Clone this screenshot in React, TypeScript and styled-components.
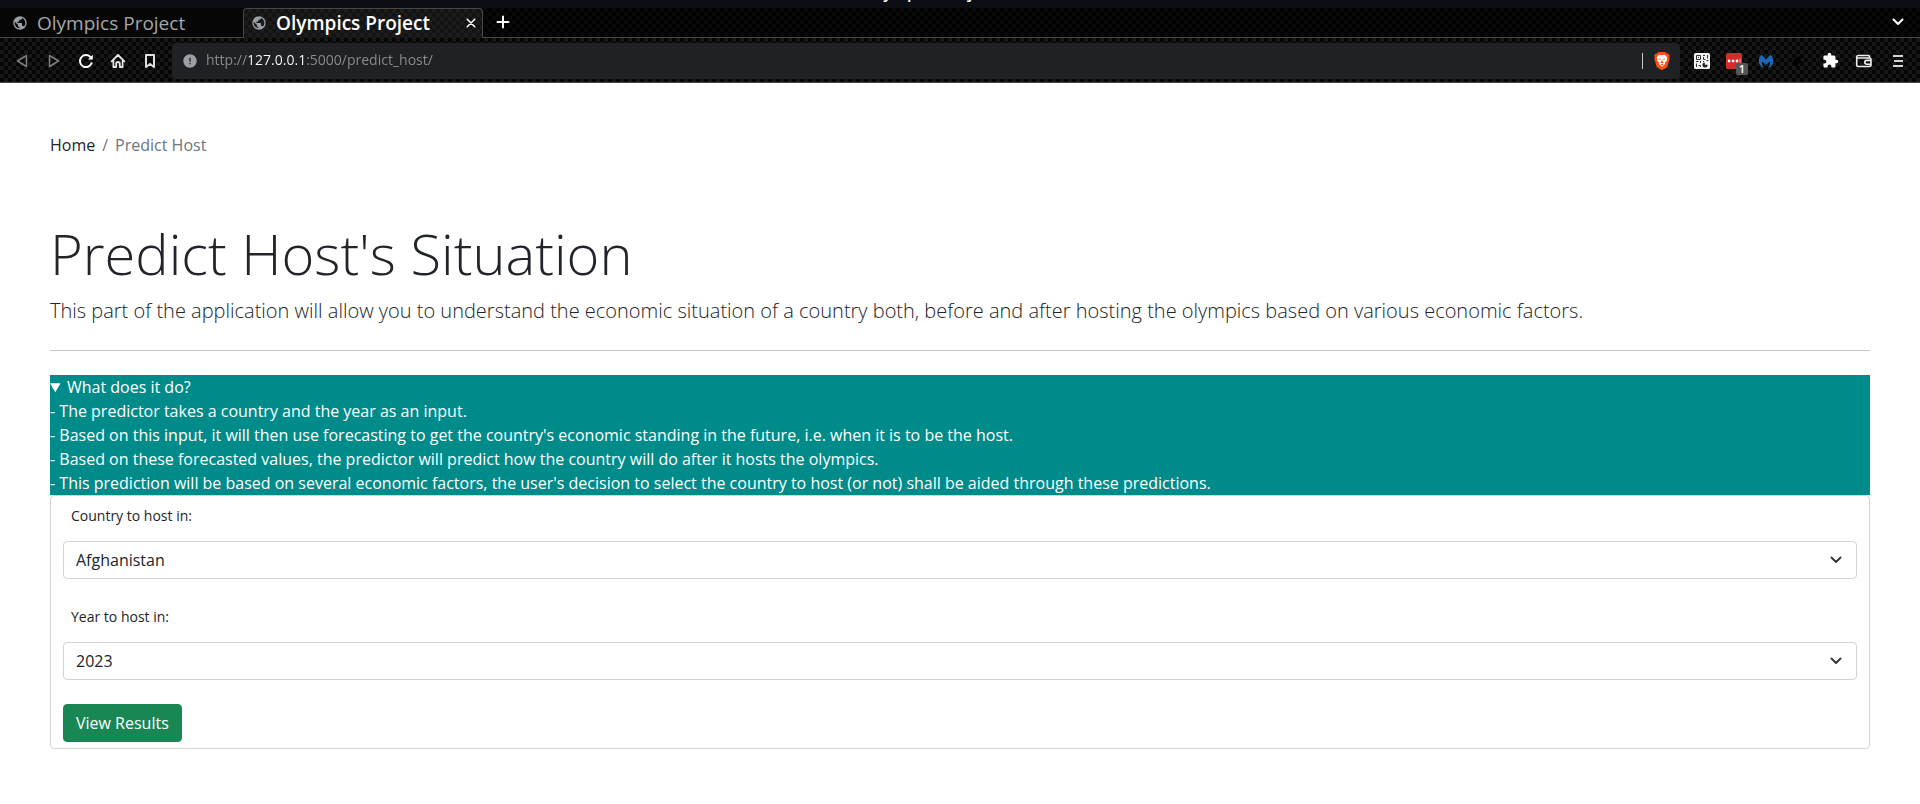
import React from "react";
import styled, { createGlobalStyle, css } from "styled-components";
import { MdPublic, MdError, MdExtension } from "react-icons/md";

const GlobalStyle = createGlobalStyle`
  *, *::before, *::after { box-sizing: border-box; }
  body {
    margin: 0;
    background: #fff;
    color: #212529;
    font-family: "Open Sans", "Noto Sans", sans-serif;
    font-size: 16px;
    line-height: 24px;
  }
  button, input, select { font: inherit; }
`;

const carbon = (light: string, dark: string) => css`
  background-color: ${dark};
  background-image: repeating-conic-gradient(${light} 0 25%, ${dark} 0 50%);
  background-size: 8px 8px;
`;

/* ---------- browser window ---------- */

const Chrome = styled.header`
  color: #fff;
  background: #000;
`;

const TitleBar = styled.div`
  display: flex;
  justify-content: center;
  align-items: flex-end;
  height: 8px;
  padding-bottom: 6px;
  overflow: hidden;
  background: #0d0e14;
  font-size: 16px;
  font-weight: 600;
  line-height: 20px;
  white-space: nowrap;
`;

const TabStrip = styled.div`
  display: flex;
  height: 30px;
  ${carbon("#090909", "#020202")}
  box-shadow: inset 0 -1px #484848;
`;

const Tab = styled.div<{ $active?: boolean }>`
  display: flex;
  align-items: center;
  gap: 9px;
  width: ${(p) => (p.$active ? "240px" : "243px")};
  padding: ${(p) => (p.$active ? "0 5px 1px 7px" : "0 5px 1px 12px")};
  font-size: 19px;
  font-weight: ${(p) => (p.$active ? 600 : 400)};
  line-height: 28px;
  color: ${(p) => (p.$active ? "#fff" : "#a4a7ab")};
  background-color: #060606;
  ${(p) =>
    p.$active
      ? css`
          ${carbon("#1c1c1c", "#131313")}
          border: 1px solid #484848;
          border-bottom: 0;
          border-radius: 4px 4px 0 0;
        `
      : css`
          box-shadow: inset 0 -1px #484848;
        `}

  > svg { color: #9aa0a6; flex: none; }
`;

const TabTitle = styled.span`
  flex: 1;
  white-space: nowrap;
`;

const IconButton = styled.button<{ $size?: number }>`
  display: flex;
  align-items: center;
  justify-content: center;
  flex: none;
  width: ${(p) => p.$size ?? 32}px;
  height: ${(p) => Math.min(p.$size ?? 28, 28)}px;
  padding: 0;
  border: 0;
  background: none;
  color: #fff;
  position: relative;
`;

const Spacer = styled.div`
  flex: 1;
`;

const Toolbar = styled.div`
  display: flex;
  align-items: center;
  height: 45px;
  padding: 0 6px;
  ${carbon("#171717", "#060606")}
  box-shadow: inset 0 -1px #484848;
`;

const AddressBar = styled.div`
  display: flex;
  align-items: center;
  flex: 1;
  gap: 8px;
  height: 36px;
  margin: 0 6px;
  padding: 0 10px;
  border-radius: 4px;
  background: #202124;
  color: #9aa0a6;

  > svg { flex: none; }
`;

const UrlInput = styled.input`
  flex: 1;
  min-width: 0;
  padding: 0 0 1px;
  border: 0;
  outline: 0;
  font-size: 14px;
  line-height: 20px;
  color: transparent;
  background: linear-gradient(90deg, #8b8d90 0 43px, #fff 43px 101px, #8b8d90 101px);
  background-clip: text;
  -webkit-background-clip: text;
`;

const Divider = styled.span`
  width: 1px;
  height: 16px;
  margin-right: 3px;
  background: #c4c6c9;
`;

const Extensions = styled.div`
  display: flex;
`;

const Badge = styled.span`
  position: absolute;
  right: 2px;
  bottom: 0;
  width: 12px;
  height: 12px;
  border-radius: 2px;
  background: #55565a;
  font-size: 11px;
  font-weight: 600;
  line-height: 12px;
  text-align: center;
`;

/* ---------- page ---------- */

const Page = styled.main`
  padding: 50px 50px 54px;
`;

const Breadcrumb = styled.nav`
  display: flex;
  gap: 7px;
  margin-bottom: 63px;
  color: #6c757d;
`;

const CrumbLink = styled.a`
  color: #212529;
  text-decoration: none;
`;

const Title = styled.h1`
  margin: 0 0 9px;
  font-size: 56px;
  font-weight: 300;
  line-height: 67px;
`;

const Lead = styled.p`
  margin: 0;
  font-size: 20px;
  font-weight: 300;
  line-height: 30px;
`;

const Rule = styled.hr`
  height: 1px;
  margin: 24px 0;
  border: 0;
  background: #c8c9ca;
`;

const Info = styled.details`
  background: #008b8b;
  color: #fff;
`;

const InfoLine = styled.div``;

const FormCard = styled.form`
  padding: 0 12px 6px;
  border: 1px solid #ced4da;
  border-radius: 4px;
`;

const Field = styled.div`
  & + & { margin-top: 18px; }
`;

const FieldLabel = styled.label`
  display: block;
  padding: 9px 8px 15px;
  font-size: 14px;
  line-height: 21px;
`;

const SelectBox = styled.div`
  position: relative;

  > svg {
    position: absolute;
    top: 11px;
    right: 13px;
    pointer-events: none;
  }
`;

const Select = styled.select`
  display: block;
  width: 100%;
  height: 38px;
  padding: 0 36px 0 12px;
  border: 1px solid #ced4da;
  border-radius: 4px;
  appearance: none;
  background: #fff;
  color: #212529;
`;

const SubmitButton = styled.button`
  display: block;
  margin-top: 24px;
  padding: 6px 12px;
  border: 1px solid #198754;
  border-radius: 4px;
  background: #198754;
  color: #fff;
`;

/* ---------- icons ---------- */

const Chevron = () => (
  <svg width="16" height="16" viewBox="0 0 16 16" fill="none" stroke="#343a40" strokeWidth="2" strokeLinecap="round" strokeLinejoin="round">
    <path d="M3.500 5.500L8 10l4.500-4.500" />
  </svg>
);

const Stroke = ({ d, size = 16, color = "#fff", width = 2 }: { d: string; size?: number; color?: string; width?: number }) => (
  <svg width={size} height={size} viewBox="0 0 16 16" fill="none" stroke={color} strokeWidth={width} strokeLinejoin="round" strokeLinecap="round">
    <path d={d} />
  </svg>
);

const Reload = () => (
  <svg width="16" height="16" viewBox="0 0 16 16" fill="none" stroke="#fff" strokeWidth="2">
    <path d="M13.6 10.2A6 6 0 1 1 12.2 3.8" strokeLinecap="round" />
    <path d="M10 6.6h4.8V1.8z" fill="#fff" stroke="none" />
  </svg>
);

const Home = () => (
  <svg width="16" height="16" viewBox="0 0 16 16" fill="none" stroke="#e6e6e6" strokeWidth="1.8" strokeLinejoin="round" strokeLinecap="round">
    <path d="M1.6 8.4L8 2l6.4 6.4M3.4 7.4V14h2.8v-3.2a1.8 1.8 0 0 1 3.6 0V14h2.8V7.4" />
  </svg>
);

const Lion = () => (
  <svg width="16" height="18" viewBox="0 0 16 18">
    <path d="M4.6 0h6.8l1.5 1.6 1.5-.2 1.4 2-.6 1.7.5 1.5-2 7.2c-.3.9-.7 1.5-1.5 2L8.9 17.7a1.6 1.6 0 0 1-1.800 0L3.800 15.800c-.8-.5-1.200-1.100-1.500-2L.3 6.600l.5-1.500-.6-1.700 1.400-2 1.500.2z" fill="#fb4f0f" />
    <path d="M8 3.2l2.2-.4 1 .2 2 2.5-.4 1.6.2 1.3-2.2 2.4.3 1.2L8 14.7 4.9 12l.3-1.2L3 8.4l.2-1.3-.4-1.600 2-2.500 1-.2z" fill="#fff" />
    <path d="M4.500 6.300l2.300.6-.5 1.300zM11.500 6.300l-2.300.6.5 1.300zM8 7.500l.6 2 1.300.8L8 11.400l-1.900-1.100 1.300-.8zM6.300 12.200L8 11.900l1.700.3L8 13.500z" fill="#fb4f0f" />
  </svg>
);

const QrCode = () => (
  <svg width="16" height="16" viewBox="0 0 16 16">
    <rect width="16" height="16" rx="1.5" fill="#f2f2f2" />
    <g fill="none" stroke="#333">
      <path d="M2.500 2.500h4v4h-4zM9 2.500h2M13.500 2v3.500M9.500 4v2.500h2M2 8.500h2.500M6.500 8v2M2.500 10.500v3.500M4.500 12.500h2V14M9 8.500h1M12.500 7.500h2" />
    </g>
    <path d="M4 4h1v1H4z" fill="#333" />
    <path d="M10.800 9.400v2.400h2.800a2.600 2.600 0 1 1-2.800-2.400z" fill="#222" />
  </svg>
);

const Dots = () => (
  <svg width="16" height="16" viewBox="0 0 16 16">
    <rect width="16" height="16" rx="1.5" fill="#d32d27" />
    <g fill="#fff">
      <circle cx="3.1" cy="8" r="1.4" />
      <circle cx="7.1" cy="8" r="1.4" />
      <circle cx="11" cy="8" r="1.4" />
      <path d="M13.600 5.500h.8v5h-.8z" opacity=".7" />
    </g>
  </svg>
);

const Wings = () => (
  <svg width="16" height="16" viewBox="0 0 16 16">
    <path d="M3.400 1.500L8 6.500l4.600-5C14.800 3.800 16 7.500 14.600 11a6 6 0 0 1-4.400 3.800c1.500-1.800 2.200-4 1.700-6.300L8 11.800 4.100 8.500c-.5 2.300.2 4.500 1.700 6.300A6 6 0 0 1 1.400 11C0 7.500 1.200 3.800 3.400 1.500z" fill="#1e66b8" />
  </svg>
);

const DarkMark = () => (
  <svg width="16" height="16" viewBox="0 0 16 16" fill="#000">
    <path d="M3 8l4-4 5-1-2 4 3 2-4 1-2 4-3-2z" />
  </svg>
);

const Wallet = () => (
  <svg width="18" height="16" viewBox="0 0 18 16" fill="none" stroke="#eee" strokeWidth="1.6" strokeLinejoin="round">
    <path d="M14.500 5V3.800A1.300 1.300 0 0 0 13.200 2.500H3A1.500 1.500 0 0 0 1.700 4v7.800A1.700 1.700 0 0 0 3.400 13.500h10.900a1.700 1.700 0 0 0 1.700-1.700V6.700A1.700 1.700 0 0 0 14.300 5H2.500M16 7.400h-4.300a1.900 1.900 0 0 0 0 3.800H16" />
  </svg>
);

const Menu = () => (
  <svg width="16" height="16" viewBox="0 0 16 16" fill="#d4d4d4">
    <path d="M3 2h10v2H3zM4 7h9v2H4zM3 12h10v2H3z" />
  </svg>
);

const notes = [
  "The predictor takes a country and the year as an input.",
  "Based on this input, it will then use forecasting to get the country's economic standing in the future, i.e. when it is to be the host.",
  "Based on these forecasted values, the predictor will predict how the country will do after it hosts the olympics.",
  "This prediction will be based on several economic factors, the user's decision to select the country to host (or not) shall be aided through these predictions.",
];

const fields = [
  { id: "country", label: "Country to host in:", options: ["Afghanistan"] },
  { id: "year", label: "Year to host in:", options: ["2023"] },
];

export default function App() {
  return (
    <>
      <GlobalStyle />
      <Chrome>
        <TitleBar>Olympics Project - Brave</TitleBar>
        <TabStrip>
          <Tab>
            <MdPublic size={16} />
            <TabTitle>Olympics Project</TabTitle>
          </Tab>
          <Tab $active>
            <MdPublic size={16} />
            <TabTitle>Olympics Project</TabTitle>
            <IconButton $size={12} aria-label="Close tab">
              <Stroke size={12} width={2} d="M3 3l10 10M13 3L3 13" />
            </IconButton>
          </Tab>
          <IconButton $size={40} aria-label="New tab">
            <Stroke size={16} d="M8 2.500v11M2.500 8h11" />
          </IconButton>
          <Spacer />
          <IconButton $size={44} aria-label="Search tabs">
            <Stroke size={16} d="M3.500 5.500L8 10l4.500-4.500" />
          </IconButton>
        </TabStrip>
        <Toolbar>
          <IconButton aria-label="Back">
            <Stroke color="#7d7d7d" width={1.5} d="M12.500 2.500v11L3.500 8z" />
          </IconButton>
          <IconButton aria-label="Forward">
            <Stroke color="#7d7d7d" width={1.5} d="M3.500 2.500v11L12.500 8z" />
          </IconButton>
          <IconButton aria-label="Reload">
            <Reload />
          </IconButton>
          <IconButton aria-label="Home">
            <Home />
          </IconButton>
          <IconButton aria-label="Bookmark">
            <Stroke color="#dedede" d="M4 2h8v12l-4-3-4 3z" />
          </IconButton>
          <AddressBar>
            <MdError size={16} />
            <UrlInput aria-label="Address" defaultValue="http://127.0.0.1:5000/predict_host/" />
            <Divider />
            <Lion />
          </AddressBar>
          <Extensions>
            <IconButton aria-label="QR code"><QrCode /></IconButton>
            <IconButton aria-label="Passwords"><Dots /><Badge>1</Badge></IconButton>
            <IconButton aria-label="Browser guard"><Wings /></IconButton>
            <IconButton aria-label="Extension"><DarkMark /></IconButton>
            <IconButton aria-label="Extensions"><MdExtension size={17} /></IconButton>
            <IconButton $size={36} aria-label="Wallet"><Wallet /></IconButton>
            <IconButton aria-label="Menu"><Menu /></IconButton>
          </Extensions>
        </Toolbar>
      </Chrome>
      <Page>
        <Breadcrumb aria-label="breadcrumb">
          <CrumbLink href="#home">Home</CrumbLink>
          <span>/</span>
          <span>Predict Host</span>
        </Breadcrumb>
        <Title>Predict Host's Situation</Title>
        <Lead>
          This part of the application will allow you to understand the economic situation of a country both, before and
          after hosting the olympics based on various economic factors.
        </Lead>
        <Rule />
        <Info open>
          <summary>What does it do?</summary>
          {notes.map((note) => (
            <InfoLine key={note}>- {note}</InfoLine>
          ))}
        </Info>
        <FormCard>
          {fields.map((field) => (
            <Field key={field.id}>
              <FieldLabel htmlFor={field.id}>{field.label}</FieldLabel>
              <SelectBox>
                <Select id={field.id}>
                  {field.options.map((option) => (
                    <option key={option}>{option}</option>
                  ))}
                </Select>
                <Chevron />
              </SelectBox>
            </Field>
          ))}
          <SubmitButton type="button">View Results</SubmitButton>
        </FormCard>
      </Page>
    </>
  );
}
